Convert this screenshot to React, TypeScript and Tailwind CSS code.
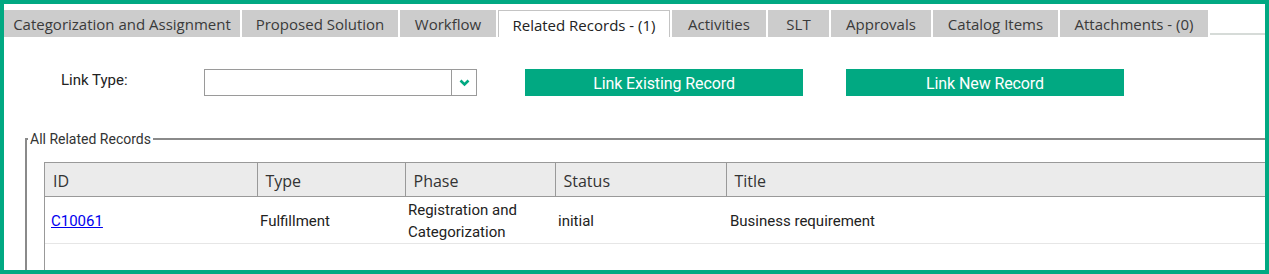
const tabs = [
  { label: "Categorization and Assignment", w: "w-[236px]" },
  { label: "Proposed Solution", w: "w-[156px]" },
  { label: "Workflow", w: "w-[96px]" },
  { label: "Related Records - (1)", w: "w-[172px]", active: true },
  { label: "Activities", w: "w-[94px]" },
  { label: "SLT", w: "w-[61px]" },
  { label: "Approvals", w: "w-[100px]" },
  { label: "Catalog Items", w: "w-[125px]" },
  { label: "Attachments - (0)", w: "w-[148px]" },
];

function Tabs() {
  return (
    <div className="flex items-end gap-[2px] pt-[6px]">
      {tabs.map((t) => (
        <div
          key={t.label}
          className={`flex h-[27px] shrink-0 items-center justify-center pt-[2px] text-[15px] ${t.w} ${
            t.active
              ? "border border-b-0 border-[#c4c4c4] bg-white text-[#222]"
              : "bg-[#cccccc] text-[#3a3a3a]"
          }`}
        >
          {t.label}
        </div>
      ))}
      <div className="mb-[2px] h-[25px] flex-1 border-b-2 border-[#d6dbd8]" />
    </div>
  );
}

function LinkRow() {
  return (
    <div className="mt-[32px] flex h-[27px] items-center">
      <div className="mb-[4px] ml-[57px] w-[143px] text-[15px] text-[#222] font-['Roboto',sans-serif]">Link Type:</div>
      <div className="flex h-[27px] w-[273px] border border-[#9a9a9a] bg-white">
        <div className="flex-1" />
        <div className="flex w-[25px] items-center justify-center border-l border-[#9a9a9a]">
          <svg width="11" height="8" viewBox="0 0 11 8" fill="none">
            <path d="M1.5 1.5 L5.5 5.5 L9.5 1.5" stroke="#01a982" strokeWidth="2.6" />
          </svg>
        </div>
      </div>
      <button className="ml-[48px] h-[27px] w-[278px] bg-[#01a982] pt-[2px] text-[16px] tracking-[-0.1px] text-white font-['Roboto',sans-serif]">
        Link Existing Record
      </button>
      <button className="ml-[43px] h-[27px] w-[278px] bg-[#01a982] pt-[2px] text-[16px] tracking-[-0.1px] text-white font-['Roboto',sans-serif]">
        Link New Record
      </button>
    </div>
  );
}

const cols = [
  { label: "ID", w: "w-[212px]" },
  { label: "Type", w: "w-[148px]" },
  { label: "Phase", w: "w-[150px]" },
  { label: "Status", w: "w-[171px]" },
  { label: "Title", w: "w-[578px]" },
];

function RecordsTable() {
  return (
    <div className="ml-[17px] mt-[14px] h-[200px] w-[1260px] border-l border-[#999]">
      <table className="w-[1259px] table-fixed border-collapse">
        <thead>
          <tr className="h-[34px] bg-[#ebebeb]">
            {cols.map((c) => (
              <th
                key={c.label}
                className={`${c.w} border border-l-0 border-[#999] px-[8px] pt-[2px] text-left text-[16px] font-normal text-[#333]`}
              >
                {c.label}
              </th>
            ))}
          </tr>
        </thead>
        <tbody className="font-['Roboto',sans-serif] text-[15px] text-[#222]">
          <tr className="h-[46px] border-b border-[#e6e6e6]">
            <td className="px-[6px] pt-[3px]">
              <a href="#" className="text-[#0000ee] underline">C10061</a>
            </td>
            <td className="px-[3px] pt-[3px]">Fulfillment</td>
            <td className="px-[3px] pt-[2px] leading-[22px]">
              Registration and
              <br />
              Categorization
            </td>
            <td className="px-[3px] pt-[3px]">initial</td>
            <td className="px-[4px] pt-[3px]">Business requirement</td>
          </tr>
        </tbody>
      </table>
    </div>
  );
}

export default function App() {
  return (
    <div className="h-[274px] w-[1269px] overflow-hidden border-4 border-[#01a982] bg-white font-['Open_Sans',sans-serif]">
      <Tabs />
      <LinkRow />
      <fieldset className="ml-[21px] mt-[34px] w-[1260px] border-l-2 border-t-2 border-[#8a8a8a]">
        <legend className="ml-[1px] px-[2px] text-[14px] leading-[18px] text-[#333] font-['Roboto',sans-serif]">
          All Related Records
        </legend>
        <RecordsTable />
      </fieldset>
    </div>
  );
}
